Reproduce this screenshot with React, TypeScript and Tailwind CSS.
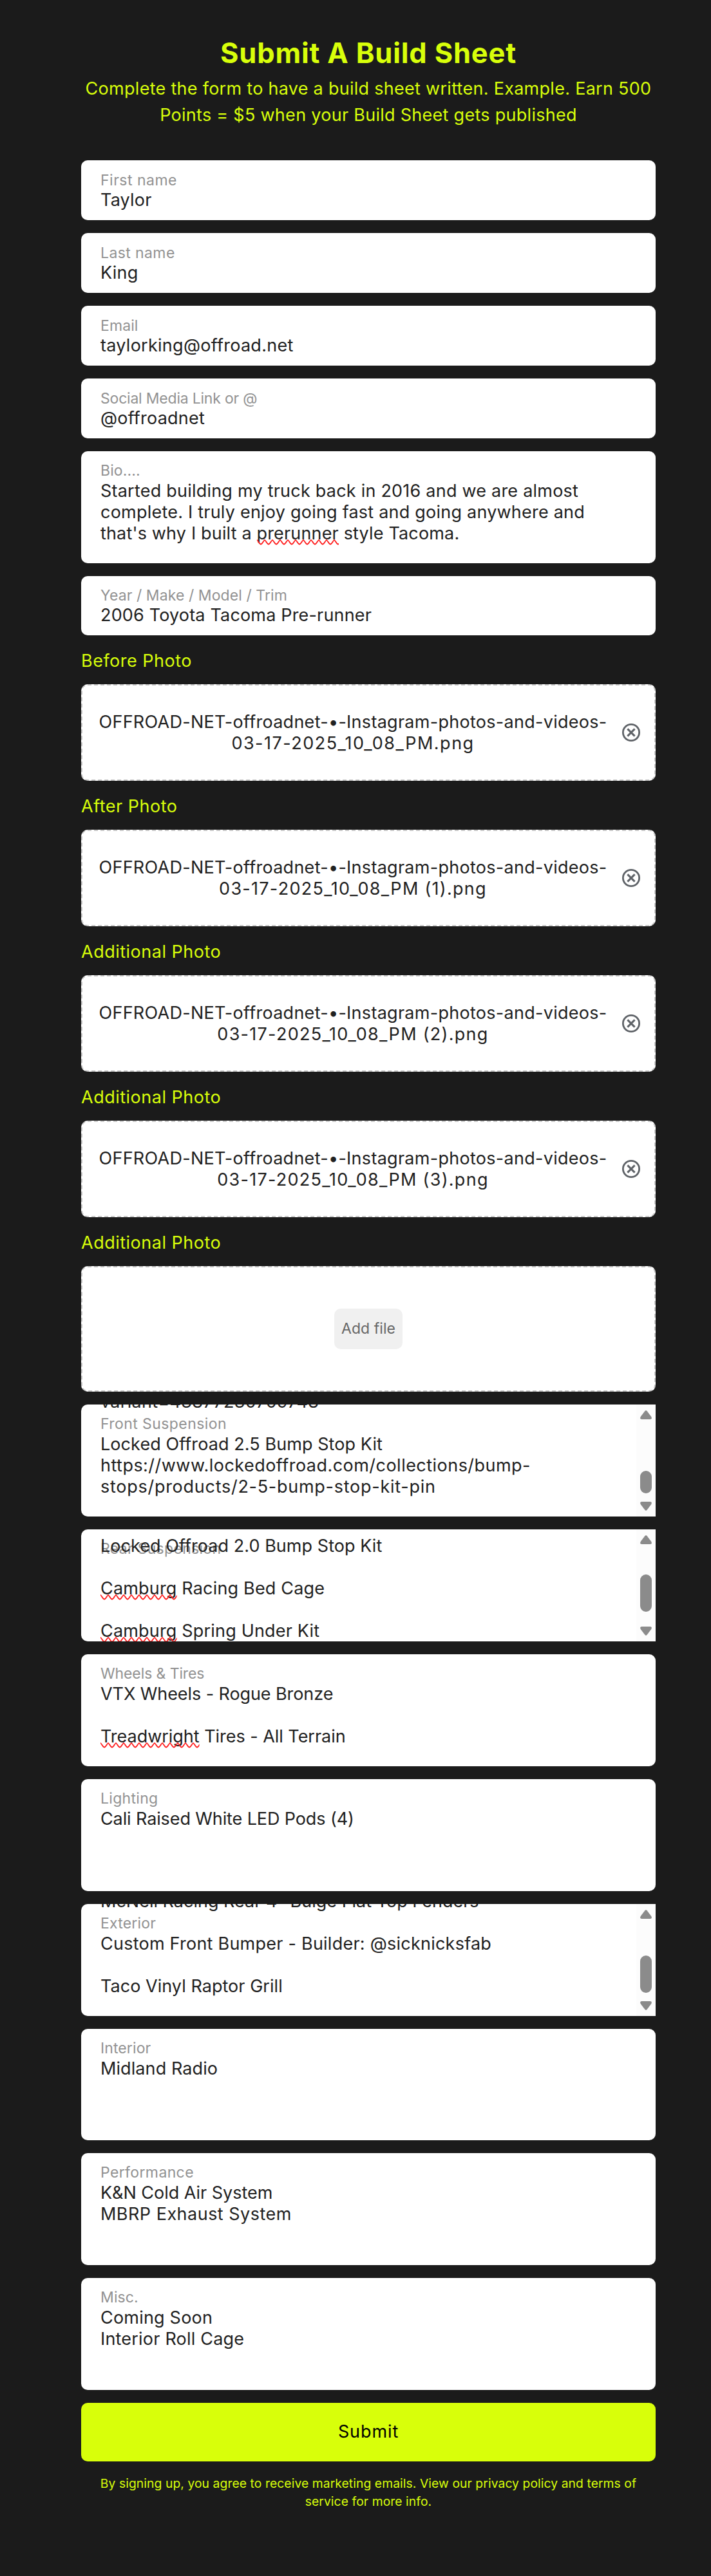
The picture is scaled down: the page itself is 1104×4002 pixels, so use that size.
import React from 'react';

interface Line {
  text: string;
  tracking?: string;
  misspelled?: string;
}

interface FieldProps {
  label: string;
  labelTracking: string;
  lines: Line[];
  className?: string;
}

interface NotesProps extends FieldProps {
  scroll?: string;
  thumb?: string;
}

/* Spell-check underline, sits just below the baseline */
const Squiggle: React.FC = () => (
  <svg className="absolute left-0 top-[26px] h-[9px] w-full" aria-hidden="true">
    <defs>
      <pattern id="squiggle" width="12" height="9" patternUnits="userSpaceOnUse">
        <path d="M-1 -0.5L0 1C2 2 4 7.5 6 7.5S10 2 12 1L13 -0.5" fill="none" stroke="#ff1a1a" strokeWidth="1.8" />
      </pattern>
    </defs>
    <rect width="100%" height="9" fill="url(#squiggle)" />
  </svg>
);

const TextLine: React.FC<Line> = ({ text, tracking = '', misspelled }) => {
  if (!misspelled) {
    return <div className={`h-[33px] whitespace-pre ${tracking}`}>{text}</div>;
  }
  const at = text.indexOf(misspelled);
  return (
    <div className={`h-[33px] whitespace-pre ${tracking}`}>
      {text.slice(0, at)}
      <span className="relative inline-block">
        {misspelled}
        <Squiggle />
      </span>
      {text.slice(at + misspelled.length)}
    </div>
  );
};

const Field: React.FC<FieldProps> = ({ label, labelTracking, lines, className = 'h-[93px] pt-[17px]' }) => (
  <div className={`rounded-[10px] bg-white px-[30px] ${className}`}>
    <div className={`h-7 text-[23px] leading-7 text-[#929292] ${labelTracking}`}>{label}</div>
    {lines.map((line) => (
      <TextLine key={line.text} {...line} />
    ))}
  </div>
);

const Scrollbar: React.FC<{ thumb: string }> = ({ thumb }) => (
  <div className="absolute inset-y-0 right-0 w-[30px] bg-[#fcfcfc]">
    <svg className="absolute left-[6px] top-[9px]" width="18" height="14" viewBox="0 0 18 14" fill="#8b8b8b">
      <path d="M7.3 1.2Q9 -.9 10.7 1.2L17.3 10Q19 14 15.5 14H2.5Q-1 14 .7 10Z" />
    </svg>
    <div className={`absolute left-[6px] w-[18px] rounded-full bg-[#8b8b8b] ${thumb}`} />
    <svg className="absolute bottom-[9px] left-[6px]" width="18" height="14" viewBox="0 0 18 14" fill="#8b8b8b">
      <path d="M7.3 12.8Q9 14.9 10.7 12.8L17.3 4Q19 0 15.5 0H2.5Q-1 0 .7 4Z" />
    </svg>
  </div>
);

const Notes: React.FC<NotesProps> = ({
  label,
  labelTracking,
  lines,
  scroll = 'mt-[45px]',
  thumb,
  className = 'h-[174px]',
}) => (
  <div
    className={`relative flow-root overflow-hidden bg-white px-[30px] ${
      thumb ? 'rounded-l-[10px]' : 'rounded-[10px]'
    } ${className}`}
  >
    <div className={`absolute left-[30px] top-4 text-[23px] leading-7 text-[#929292] ${labelTracking}`}>{label}</div>
    <div className={`relative ${scroll}`}>
      {lines.map((line, i) => (
        <TextLine key={i} {...line} />
      ))}
    </div>
    {thumb && <Scrollbar thumb={thumb} />}
  </div>
);

const PhotoLabel: React.FC<{ children: React.ReactNode }> = ({ children }) => (
  <div className="mb-5 mt-[23px] h-[33px] tracking-[0.5px] text-[#d8ff0a]">{children}</div>
);

const Photo: React.FC<{ title: string; suffix?: string }> = ({ title, suffix }) => (
  <div>
    <PhotoLabel>{title}</PhotoLabel>
    <div className="flex h-[150px] items-center rounded-[10px] border-2 border-dashed border-[#c8c8c8] bg-white pl-[18px] pr-[22px]">
      <div className="w-[804px] text-center">
        <div className="whitespace-nowrap tracking-[0.28px]">OFFROAD-NET-offroadnet-•-Instagram-photos-and-videos-</div>
        <div className={suffix ? 'tracking-[1.28px]' : 'tracking-[1.49px]'}>
          03-17-2025_10_08_PM{suffix}.png
        </div>
      </div>
      <svg className="ml-4 shrink-0" width="28" height="28" viewBox="0 0 28 28" fill="none" stroke="#5f6368">
        <circle cx="14" cy="14" r="12.6" strokeWidth="2.8" />
        <path d="M8.4 8.4l11.2 11.2M19.6 8.4L8.4 19.6" strokeWidth="3" />
      </svg>
    </div>
  </div>
);

export default function App() {
  return (
    <div className="min-h-[4002px] bg-[#1b1b1b] pt-[55px] font-[Inter,sans-serif] text-[27px] leading-[33px] text-[#212121]">
      <div className="ml-[126px] w-[892px]">
        {/* Header */}
        <div className="text-center text-[#d8ff0a]">
          <h1 className="text-[43.5px] font-bold leading-[54px] tracking-[0.8px]">Submit A Build Sheet</h1>
          <p className="mt-[9px] whitespace-nowrap leading-[40.5px] tracking-[0.28px]">
            Complete the form to have a build sheet written. Example. Earn 500
            <br />
            Points = $5 when your Build Sheet gets published
          </p>
        </div>

        {/* Contact details */}
        <div className="mt-[50px] flex flex-col gap-5">
          <Field label="First name" labelTracking="tracking-[0.5px]" lines={[{ text: 'Taylor', tracking: 'tracking-[0.2px]' }]} />
          <Field label="Last name" labelTracking="tracking-[0.4px]" lines={[{ text: 'King', tracking: 'tracking-[0.2px]' }]} />
          <Field label="Email" labelTracking="tracking-[0.1px]" lines={[{ text: 'taylorking@offroad.net', tracking: 'tracking-[0.27px]' }]} />
          <Field label="Social Media Link or @" labelTracking="tracking-[-0.21px]" lines={[{ text: '@offroadnet', tracking: 'tracking-[0.22px]' }]} />
          <Notes
            label="Bio...."
            labelTracking="tracking-[0.1px]"
            lines={[
              { text: 'Started building my truck back in 2016 and we are almost', tracking: 'tracking-[0.22px]' },
              { text: 'complete. I truly enjoy going fast and going anywhere and', tracking: 'tracking-[0.22px]' },
              { text: "that's why I built a prerunner style Tacoma.", tracking: 'tracking-[0.16px]', misspelled: 'prerunner' },
            ]}
          />
          <Field
            label="Year / Make / Model / Trim"
            labelTracking="tracking-[0.08px]"
            lines={[{ text: '2006 Toyota Tacoma Pre-runner', tracking: 'tracking-[0.17px]' }]}
            className="h-[92px] pt-4"
          />
        </div>

        {/* Photos */}
        <Photo title="Before Photo" />
        <Photo title="After Photo" suffix=" (1)" />
        <Photo title="Additional Photo" suffix=" (2)" />
        <Photo title="Additional Photo" suffix=" (3)" />
        <PhotoLabel>Additional Photo</PhotoLabel>
        <div className="flex h-[195px] items-center justify-center rounded-[10px] border-2 border-dashed border-[#c8c8c8] bg-white">
          <button className="h-[63px] w-[106px] rounded-[10px] bg-[#f0f0f0] text-[23px] tracking-[0.05px] text-[#666]">Add file</button>
        </div>

        {/* Build sheet */}
        <div className="mt-5 flex flex-col gap-5">
          <Notes
            label="Front Suspension"
            labelTracking="tracking-[0.42px]"
            scroll="-mt-[21px]"
            thumb="top-[103px] h-[35px]"
            lines={[
              { text: 'variant=43877230709748', tracking: 'tracking-[0.3px]' },
              { text: '' },
              { text: 'Locked Offroad 2.5 Bump Stop Kit', tracking: 'tracking-[0.08px]' },
              { text: 'https://www.lockedoffroad.com/collections/bump-', tracking: 'tracking-[0.47px]' },
              { text: 'stops/products/2-5-bump-stop-kit-pin', tracking: 'tracking-[0.73px]' },
            ]}
          />
          <Notes
            label="Rear Suspension"
            labelTracking="tracking-[0.3px]"
            scroll="mt-[9px]"
            thumb="top-[70px] h-[58px]"
            lines={[
              { text: 'Locked Offroad 2.0 Bump Stop Kit', tracking: 'tracking-[0.05px]' },
              { text: '' },
              { text: 'Camburg Racing Bed Cage', tracking: 'tracking-[0.18px]', misspelled: 'Camburg' },
              { text: '' },
              { text: 'Camburg Spring Under Kit', tracking: 'tracking-[0.18px]', misspelled: 'Camburg' },
            ]}
          />
          <Notes
            label="Wheels & Tires"
            labelTracking="tracking-[-0.1px]"
            lines={[
              { text: 'VTX Wheels - Rogue Bronze', tracking: 'tracking-[-0.08px]' },
              { text: '' },
              { text: 'Treadwright Tires - All Terrain', tracking: 'tracking-[-0.03px]', misspelled: 'Treadwright' },
            ]}
          />
          <Notes
            label="Lighting"
            labelTracking="tracking-[0.3px]"
            lines={[{ text: 'Cali Raised White LED Pods (4)', tracking: 'tracking-[-0.11px]' }]}
          />
          <Notes
            label="Exterior"
            labelTracking="tracking-[0.2px]"
            scroll="-mt-[21px]"
            thumb="top-[80px] h-[58px]"
            lines={[
              { text: 'McNeil Racing Rear 4" Bulge Flat Top Fenders', tracking: 'tracking-[0px]' },
              { text: '' },
              { text: 'Custom Front Bumper - Builder: @sicknicksfab', tracking: 'tracking-[0.24px]' },
              { text: '' },
              { text: 'Taco Vinyl Raptor Grill', tracking: 'tracking-[0.04px]' },
            ]}
          />
          <Notes
            label="Interior"
            labelTracking="tracking-[0.1px]"
            className="h-[173px]"
            lines={[{ text: 'Midland Radio', tracking: 'tracking-[0.09px]' }]}
          />
          <Notes
            label="Performance"
            labelTracking="tracking-[0.37px]"
            lines={[
              { text: 'K&N Cold Air System', tracking: 'tracking-[-0.03px]' },
              { text: 'MBRP Exhaust System', tracking: 'tracking-[0.48px]' },
            ]}
          />
          <Notes
            label="Misc."
            labelTracking="tracking-[0.1px]"
            lines={[
              { text: 'Coming Soon', tracking: 'tracking-[0.2px]' },
              { text: 'Interior Roll Cage', tracking: 'tracking-[0.2px]' },
            ]}
          />
          <button className="h-[91px] rounded-[10px] bg-[#d8ff0a] pb-[2px] tracking-[0.9px] text-black">Submit</button>
        </div>

        {/* Disclaimer */}
        <p className="mt-5 whitespace-nowrap text-center text-[19.3px] leading-7 tracking-[0.08px] text-[#d8ff0a]">
          By signing up, you agree to receive marketing emails. View our privacy policy and terms of
          <br />
          service for more info.
        </p>
      </div>
    </div>
  );
}
